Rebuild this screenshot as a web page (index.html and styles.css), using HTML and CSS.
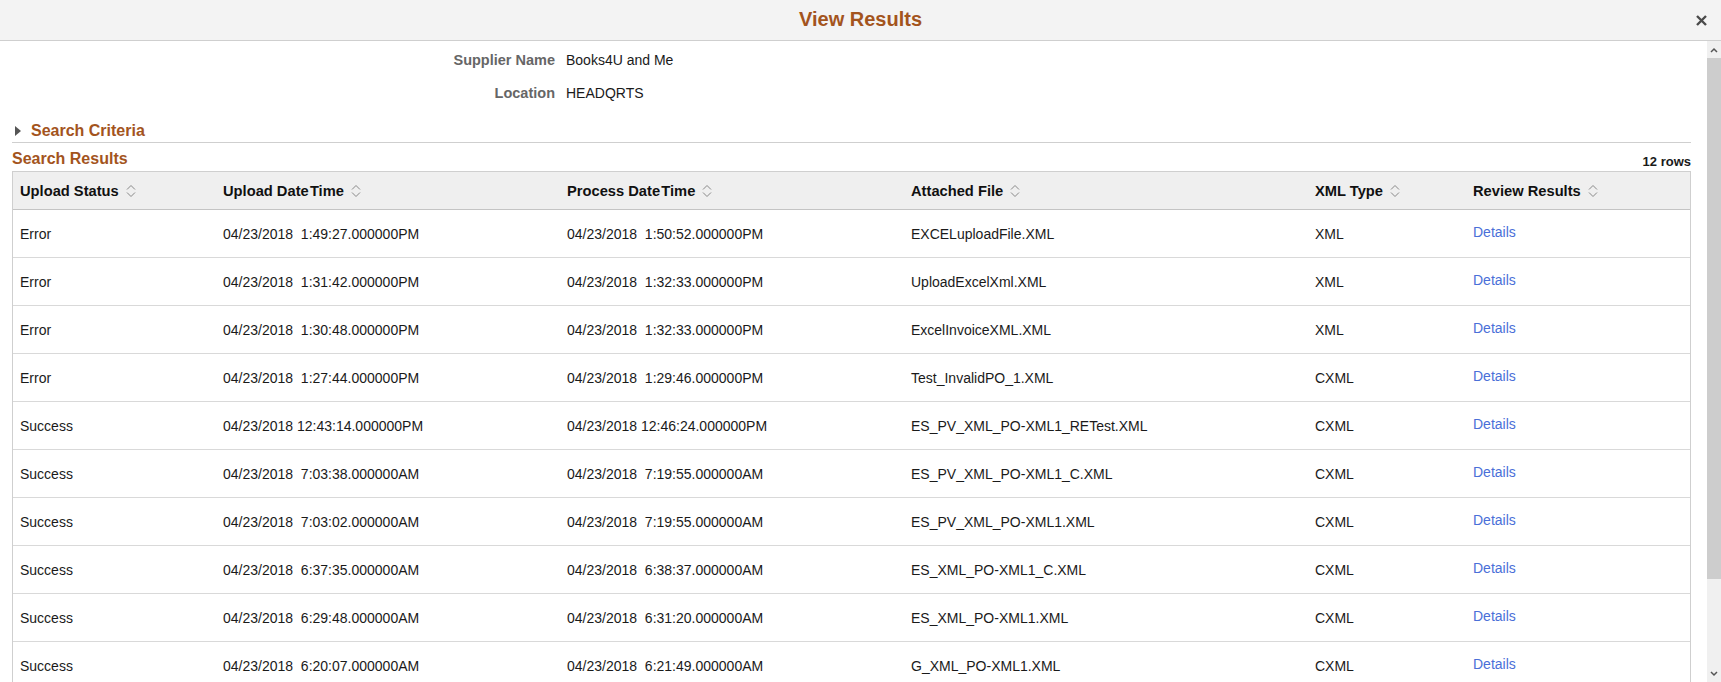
FILE: index.html
```html
<!DOCTYPE html>
<html lang="en">
<head>
    <meta charset="UTF-8">
    <meta name="viewport" content="width=device-width, initial-scale=1.0">
    <title>View Results</title>
    <link rel="stylesheet" href="styles.css">
</head>
<body>
    <header class="modal-head">
        <span></span>
        <h1>View Results</h1>
        <button class="close-btn" aria-label="Close">
            <svg width="11" height="11" viewBox="0 0 11 11"><path d="M1 1 L10 10 M10 1 L1 10" stroke="#4a4a4a" stroke-width="2.4"/></svg>
        </button>
    </header>

    <div class="modal-body">
        <div class="content">
            <div class="supplier-info">
                <span class="label">Supplier Name</span>
                <span class="value">Books4U and Me</span>
                <span class="label">Location</span>
                <span class="value">HEADQRTS</span>
            </div>

            <div class="criteria">
                <span class="arrow"></span>
                <span class="section-title">Search Criteria</span>
            </div>

            <div class="results-bar">
                <span class="section-title">Search Results</span>
                <span class="row-count">12 rows</span>
            </div>

            <table class="results">
                <colgroup>
                    <col style="width: 203px">
                    <col style="width: 344px">
                    <col style="width: 344px">
                    <col style="width: 404px">
                    <col style="width: 158px">
                    <col>
                </colgroup>
                <thead>
                    <tr>
                        <th>Upload Status <svg class="sort" width="10" height="14" viewBox="0 0 10 14"><path d="M1 5.5 L5 1.5 L9 5.5 M1 8.5 L5 12.5 L9 8.5" fill="none" stroke="#888" stroke-width="1"/></svg></th>
                        <th>Upload Date&#8202;Time <svg class="sort" width="10" height="14" viewBox="0 0 10 14"><path d="M1 5.5 L5 1.5 L9 5.5 M1 8.5 L5 12.5 L9 8.5" fill="none" stroke="#888" stroke-width="1"/></svg></th>
                        <th>Process Date&#8202;Time <svg class="sort" width="10" height="14" viewBox="0 0 10 14"><path d="M1 5.5 L5 1.5 L9 5.5 M1 8.5 L5 12.5 L9 8.5" fill="none" stroke="#888" stroke-width="1"/></svg></th>
                        <th>Attached File <svg class="sort" width="10" height="14" viewBox="0 0 10 14"><path d="M1 5.5 L5 1.5 L9 5.5 M1 8.5 L5 12.5 L9 8.5" fill="none" stroke="#888" stroke-width="1"/></svg></th>
                        <th>XML Type <svg class="sort" width="10" height="14" viewBox="0 0 10 14"><path d="M1 5.5 L5 1.5 L9 5.5 M1 8.5 L5 12.5 L9 8.5" fill="none" stroke="#888" stroke-width="1"/></svg></th>
                        <th>Review Results <svg class="sort" width="10" height="14" viewBox="0 0 10 14"><path d="M1 5.5 L5 1.5 L9 5.5 M1 8.5 L5 12.5 L9 8.5" fill="none" stroke="#888" stroke-width="1"/></svg></th>
                    </tr>
                </thead>
                <tbody>
                    <tr>
                        <td>Error</td>
                        <td>04/23/2018  1:49:27.000000PM</td>
                        <td>04/23/2018  1:50:52.000000PM</td>
                        <td>EXCELuploadFile.XML</td>
                        <td>XML</td>
                        <td class="review"><a href="#">Details</a></td>
                    </tr>
                    <tr>
                        <td>Error</td>
                        <td>04/23/2018  1:31:42.000000PM</td>
                        <td>04/23/2018  1:32:33.000000PM</td>
                        <td>UploadExcelXml.XML</td>
                        <td>XML</td>
                        <td class="review"><a href="#">Details</a></td>
                    </tr>
                    <tr>
                        <td>Error</td>
                        <td>04/23/2018  1:30:48.000000PM</td>
                        <td>04/23/2018  1:32:33.000000PM</td>
                        <td>ExcelInvoiceXML.XML</td>
                        <td>XML</td>
                        <td class="review"><a href="#">Details</a></td>
                    </tr>
                    <tr>
                        <td>Error</td>
                        <td>04/23/2018  1:27:44.000000PM</td>
                        <td>04/23/2018  1:29:46.000000PM</td>
                        <td>Test_InvalidPO_1.XML</td>
                        <td>CXML</td>
                        <td class="review"><a href="#">Details</a></td>
                    </tr>
                    <tr>
                        <td>Success</td>
                        <td>04/23/2018 12:43:14.000000PM</td>
                        <td>04/23/2018 12:46:24.000000PM</td>
                        <td>ES_PV_XML_PO-XML1_RETest.XML</td>
                        <td>CXML</td>
                        <td class="review"><a href="#">Details</a></td>
                    </tr>
                    <tr>
                        <td>Success</td>
                        <td>04/23/2018  7:03:38.000000AM</td>
                        <td>04/23/2018  7:19:55.000000AM</td>
                        <td>ES_PV_XML_PO-XML1_C.XML</td>
                        <td>CXML</td>
                        <td class="review"><a href="#">Details</a></td>
                    </tr>
                    <tr>
                        <td>Success</td>
                        <td>04/23/2018  7:03:02.000000AM</td>
                        <td>04/23/2018  7:19:55.000000AM</td>
                        <td>ES_PV_XML_PO-XML1.XML</td>
                        <td>CXML</td>
                        <td class="review"><a href="#">Details</a></td>
                    </tr>
                    <tr>
                        <td>Success</td>
                        <td>04/23/2018  6:37:35.000000AM</td>
                        <td>04/23/2018  6:38:37.000000AM</td>
                        <td>ES_XML_PO-XML1_C.XML</td>
                        <td>CXML</td>
                        <td class="review"><a href="#">Details</a></td>
                    </tr>
                    <tr>
                        <td>Success</td>
                        <td>04/23/2018  6:29:48.000000AM</td>
                        <td>04/23/2018  6:31:20.000000AM</td>
                        <td>ES_XML_PO-XML1.XML</td>
                        <td>CXML</td>
                        <td class="review"><a href="#">Details</a></td>
                    </tr>
                    <tr>
                        <td>Success</td>
                        <td>04/23/2018  6:20:07.000000AM</td>
                        <td>04/23/2018  6:21:49.000000AM</td>
                        <td>G_XML_PO-XML1.XML</td>
                        <td>CXML</td>
                        <td class="review"><a href="#">Details</a></td>
                    </tr>
                </tbody>
            </table>
        </div>

        <!-- fake scrollbar so it looks the same everywhere -->
        <div class="scrollbar">
            <div class="sb-btn">
                <svg width="8" height="6" viewBox="0 0 8 6"><path d="M1 5 L4 2 L7 5" fill="none" stroke="#555" stroke-width="1.5"/></svg>
            </div>
            <div class="sb-track"><div class="sb-thumb"></div></div>
            <div class="sb-btn">
                <svg width="8" height="6" viewBox="0 0 8 6"><path d="M1 1 L4 4 L7 1" fill="none" stroke="#555" stroke-width="1.5"/></svg>
            </div>
        </div>
    </div>
</body>
</html>
```

FILE: styles.css
```css
* {
    margin: 0;
    padding: 0;
    box-sizing: border-box;
}
html, body {
    height: 100%;
    overflow: hidden;
}
body {
    font-family: "Liberation Sans", Arial, sans-serif;
    font-size: 14px;
    color: #1a1a1a;
    background-color: white;
    display: flex;
    flex-direction: column;
}
.modal-head {
    height: 41px;
    flex-shrink: 0;
    background-color: #f3f3f3;
    border-bottom: 1px solid #cfcfcf;
    display: grid;
    grid-template-columns: 1fr auto 1fr;
    align-items: center;
}
.modal-head h1 {
    font-size: 20px;
    font-weight: bold;
    color: #a3541d;
    padding-bottom: 2px;
}
.close-btn {
    justify-self: end;
    margin-right: 14px;
    border: none;
    background: none;
    display: flex;
    cursor: pointer;
}
.modal-body {
    flex: 1;
    display: flex;
    min-height: 0;
}
.content {
    flex: 1;
    overflow: hidden;
    padding: 3px 16px 0 12px;
}
.supplier-info {
    display: grid;
    grid-template-columns: 543px auto;
    column-gap: 11px;
}
.supplier-info span {
    line-height: 33px;
}
.label {
    text-align: right;
    font-weight: bold;
    font-size: 14.5px;
    color: #666;
}
.value {
    color: #1a1a1a;
}
.section-title {
    font-size: 16px;
    font-weight: bold;
    color: #a3541d;
    line-height: 20px;
}
.criteria {
    margin-top: 10px;
    height: 23px;
    border-bottom: 1px solid #cfcfcf;
    display: flex;
    align-items: center;
    padding-bottom: 1px;
}
.arrow {
    width: 0;
    height: 0;
    margin: 0 10px 0 3px;
    border-top: 5px solid transparent;
    border-bottom: 5px solid transparent;
    border-left: 6px solid #555;
}
.results-bar {
    display: flex;
    justify-content: space-between;
    align-items: flex-end;
    padding: 6px 0 2px;
}
.row-count {
    font-size: 13px;
    font-weight: bold;
    color: #1a1a1a;
    line-height: 15px;
}
.results {
    width: 1679px;
    table-layout: fixed;
    border-collapse: separate;
    border-spacing: 0;
    border: 1px solid #cfcfcf;
    border-bottom: none;
}
.results th {
    height: 38px;
    background-color: #efefef;
    border-bottom: 1px solid #c4c4c4;
    text-align: left;
    font-size: 14.7px;
    font-weight: bold;
    color: #111;
    padding: 0 7px;
    white-space: nowrap;
}
.sort {
    vertical-align: -2px;
    margin-left: 3px;
}
.results td {
    height: 48px;
    border-bottom: 1px solid #d9d9d9;
    padding: 0 7px;
    white-space: pre;
    vertical-align: middle;
}
.results td.review {
    padding-bottom: 4px;
}
.review a {
    color: #4a6fd8;
    text-decoration: none;
}
.scrollbar {
    width: 14px;
    flex-shrink: 0;
    display: flex;
    flex-direction: column;
    background-color: #f0f0f0;
}
.sb-btn {
    height: 17px;
    display: flex;
    justify-content: center;
    align-items: center;
}
.sb-track {
    flex: 1;
}
.sb-thumb {
    height: 521px;
    background-color: #cdcdcd;
}
```
